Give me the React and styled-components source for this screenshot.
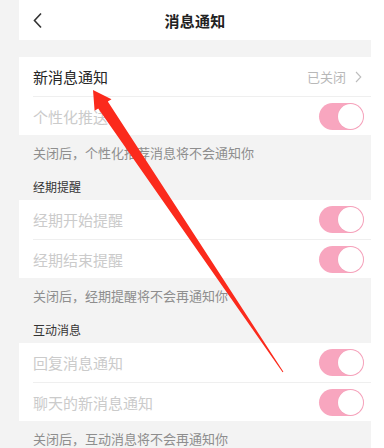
import styled, { createGlobalStyle } from "styled-components";

const GlobalStyle = createGlobalStyle`
  html, body {
    margin: 0;
    padding: 0;
    background: #ffffff;
  }
  body {
    font-family: "Noto Sans CJK SC", "Noto Sans", sans-serif;
  }
`;

const Page = styled.div`
  position: relative;
  width: 384px;
  height: 448px;
  overflow: hidden;
  display: flex;
  align-items: flex-start;
  background: #ffffff;
`;

const Gutter = styled.div`
  width: 19px;
  height: 100%;
  flex-shrink: 0;
  background: #f3f3f3;
`;

const Main = styled.div`
  width: 352px;
  min-height: 100%;
  flex-shrink: 0;
  background: #f3f3f3;
`;

const Header = styled.div`
  height: 40px;
  background: #ffffff;
  display: flex;
  align-items: center;
  justify-content: center;
  position: relative;
`;

const BackButton = styled.div`
  position: absolute;
  left: 13px;
  top: 12px;
  width: 12px;
  height: 17px;
  display: flex;
`;

const Title = styled.div`
  font-size: 15px;
  font-weight: 600;
  color: #222222;
  letter-spacing: 0.2px;
`;

const Spacer = styled.div`
  height: 17px;
`;

const Group = styled.div`
  background: #ffffff;
  display: flex;
  flex-direction: column;
`;

const Row = styled.div`
  height: 39px;
  box-sizing: border-box;
  margin-left: 14px;
  padding-right: 7px;
  display: flex;
  align-items: center;
  justify-content: space-between;
  & + & {
    border-top: 1px solid #efefef;
  }
`;

const Label = styled.span`
  font-size: 15px;
  color: ${(p) => (p.$disabled ? "#cbcbcb" : "#262626")};
`;

const Status = styled.span`
  display: flex;
  align-items: center;
  gap: 9px;
  font-size: 13px;
  color: #b8b8b8;
  margin-right: 2px;
`;

const Track = styled.div`
  width: 45px;
  height: 27px;
  box-sizing: border-box;
  border-radius: 14px;
  background: #f8a6bf;
  display: flex;
  align-items: center;
  justify-content: flex-end;
  padding: 1px;
`;

const Knob = styled.div`
  width: 25px;
  height: 25px;
  border-radius: 50%;
  background: #ffffff;
  box-shadow: 0 0 0 0.5px #f3a0b9;
`;

const Note = styled.div`
  padding: 9px 14px;
  font-size: 13px;
  line-height: 17px;
  color: #8e8e8e;
`;

const SectionTitle = styled.div`
  padding: 9px 14px 5px;
  font-size: 12px;
  line-height: 16px;
  color: #333333;
`;

const ArrowLayer = styled.svg`
  position: absolute;
  left: 0;
  top: 0;
  pointer-events: none;
`;

const Toggle = () => (
  <Track>
    <Knob />
  </Track>
);

const sections = [
  {
    title: "经期提醒",
    rows: ["经期开始提醒", "经期结束提醒"],
    note: "关闭后，经期提醒将不会再通知你",
  },
  {
    title: "互动消息",
    rows: ["回复消息通知", "聊天的新消息通知"],
    note: "关闭后，互动消息将不会再通知你",
  },
];

const App = () => {
  return (
    <Page>
      <GlobalStyle />
      <Gutter />
      <Main>
        <Header>
          <BackButton>
            <svg width="12" height="17" viewBox="0 0 12 17">
              <polyline points="9,1.5 2.5,8.5 9,15.5" fill="none" stroke="#333" strokeWidth="1.6" />
            </svg>
          </BackButton>
          <Title>消息通知</Title>
        </Header>
        <Spacer />
        <Group>
          <Row>
            <Label>新消息通知</Label>
            <Status>
              已关闭
              <svg width="7" height="12" viewBox="0 0 7 12">
                <polyline points="1,1 5.8,6 1,11" fill="none" stroke="#bdbdbd" strokeWidth="1.1" />
              </svg>
            </Status>
          </Row>
          <Row>
            <Label $disabled>个性化推送</Label>
            <Toggle />
          </Row>
        </Group>
        <Note>关闭后，个性化推荐消息将不会通知你</Note>
        {sections.map((s) => (
          <div key={s.title}>
            <SectionTitle>{s.title}</SectionTitle>
            <Group>
              {s.rows.map((r) => (
                <Row key={r}>
                  <Label $disabled>{r}</Label>
                  <Toggle />
                </Row>
              ))}
            </Group>
            <Note>{s.note}</Note>
          </div>
        ))}
      </Main>
      <ArrowLayer width="384" height="448" viewBox="0 0 384 448">
        <polygon
          points="93,90 111.5,99.3 107.8,101.6 283.4,371.8 282.6,372.2 98.2,108.6 94.6,110.8"
          fill="#fb2a1c"
        />
      </ArrowLayer>
    </Page>
  );
};

export default App;
